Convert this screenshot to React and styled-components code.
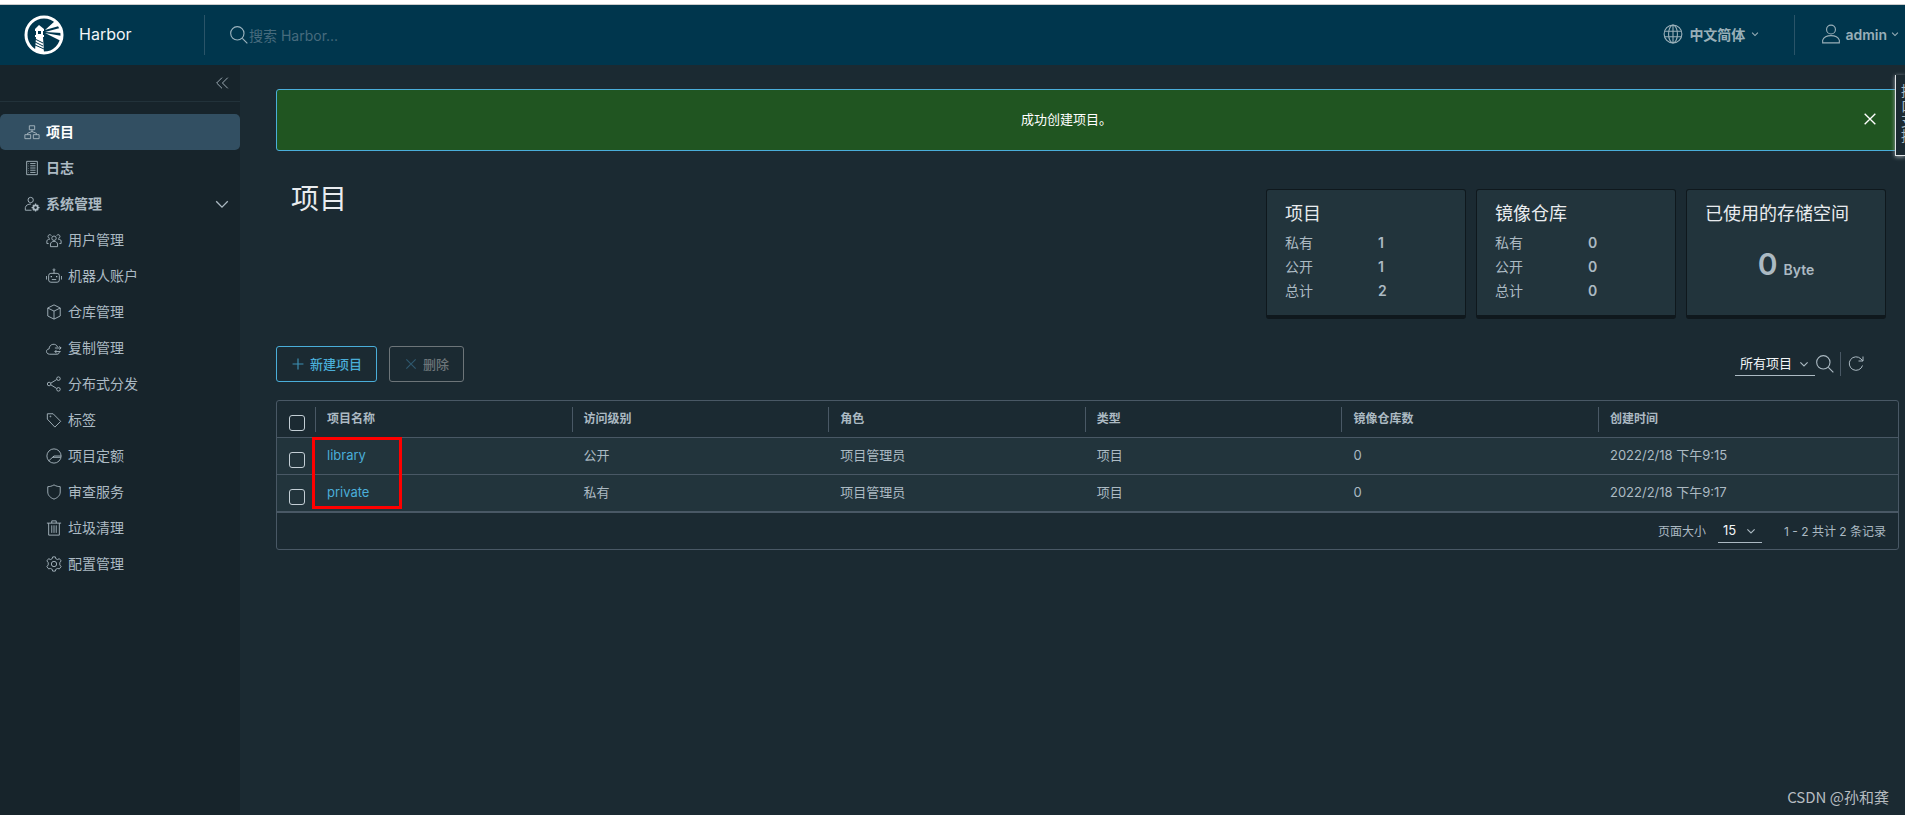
import { useState } from 'react';
import styled, { createGlobalStyle } from 'styled-components';

const GlobalStyle = createGlobalStyle`
  * {
    box-sizing: border-box;
  }

  body {
    margin: 0;
    background: #1b2a32;
    color: #acbac3;
    font-family: Inter, "Noto Sans CJK SC", sans-serif;
    font-size: 14px;
  }

  button, input, select {
    font-family: inherit;
  }
`;

const Page = styled.div`
  display: flex;
  flex-direction: column;
  min-height: 100vh;
  position: relative;
  overflow: hidden;
`;

const TopStrip = styled.div`
  height: 5px;
  background: #fff;
  border-bottom: 1px solid #ccc;
`;

const Header = styled.header`
  display: flex;
  align-items: center;
  height: 60px;
  padding: 0 6px 0 24px;
  background: #00364d;
`;

const Brand = styled.a`
  display: flex;
  align-items: center;
  gap: 15px;
  width: 180px;
  color: #f2f5f7;
  font-size: 16px;
  text-decoration: none;
`;

const BrandName = styled.span`
  padding-bottom: 2px;
`;

const HeaderDivider = styled.span`
  width: 1px;
  height: 40px;
  background: #2a5468;
`;

const SearchBox = styled.label`
  display: flex;
  align-items: center;
  flex: 1;
  padding-left: 24px;
  color: #9db5c0;
`;

const SearchInput = styled.input`
  flex: 1;
  height: 24px;
  padding: 0;
  border: none;
  outline: none;
  background: transparent;
  color: #dfe8ec;
  font-size: 14px;

  &::placeholder {
    color: #476b7d;
    opacity: 1;
  }
`;

const HeaderButton = styled.button`
  display: flex;
  align-items: center;
  gap: ${(props) => props.$gap};
  padding: ${(props) => props.$padding};
  border: none;
  background: transparent;
  color: #99afb8;
  font-size: 14px;
  font-weight: 600;
  cursor: pointer;
`;

const Body = styled.div`
  display: flex;
  flex: 1;
`;

const Sidebar = styled.nav`
  flex: 0 0 240px;
  background: #17242b;
`;

const CollapseBar = styled.div`
  display: flex;
  justify-content: flex-end;
  align-items: center;
  height: 37px;
  padding-right: 10px;
  border-bottom: 1px solid #22323a;
`;

const IconButton = styled.button`
  display: flex;
  align-items: center;
  justify-content: center;
  padding: 0;
  border: none;
  background: transparent;
  color: ${(props) => props.$color || '#acbac3'};
  cursor: pointer;
`;

const NavList = styled.ul`
  margin: 12px 0 0;
  padding: 0;
  list-style: none;
`;

const NavLink = styled.a`
  display: flex;
  align-items: center;
  gap: 6px;
  height: 36px;
  padding: 0 10px 0 ${(props) => (props.$sub ? '46px' : '24px')};
  border-radius: 5px;
  background: ${(props) => (props.$active ? '#324f62' : 'transparent')};
  color: ${(props) => (props.$active ? '#fff' : '#acbac3')};
  font-weight: ${(props) => (props.$sub ? 400 : 700)};
  text-decoration: none;

  svg {
    color: #acbac3;
  }
`;

const NavText = styled.span`
  flex: 1;
  padding-bottom: 2px;
`;

const Main = styled.main`
  flex: 1;
  min-width: 0;
  padding: 24px 6px 24px 36px;
`;

const Alert = styled.div`
  display: flex;
  align-items: center;
  height: 62px;
  padding: 0 20px 3px 0;
  border: 1px solid #4aaed9;
  border-radius: 3px;
  background: #205521;
  color: #fff;
  font-size: 13px;
`;

const AlertText = styled.span`
  flex: 1;
  padding-right: 6px;
  text-align: center;
`;

const Summary = styled.section`
  display: flex;
  justify-content: space-between;
  align-items: flex-start;
  padding: 38px 13px 0 15px;
`;

const PageTitle = styled.h1`
  margin: 0;
  color: #e9ecef;
  font-size: 28px;
  font-weight: 400;
  line-height: 20px;
`;

const Cards = styled.div`
  display: flex;
  gap: 10px;
`;

const Card = styled.div`
  width: 200px;
  height: 130px;
  padding: 12px 18px 0;
  border: 1px solid #0f181d;
  border-bottom-width: 4px;
  border-radius: 3px;
  background: #22343c;
`;

const CardTitle = styled.h2`
  margin: 0 0 5px;
  color: #e9ecef;
  font-size: 18px;
  font-weight: 400;
  line-height: 24px;
  white-space: nowrap;
`;

const Stats = styled.dl`
  display: grid;
  grid-template-columns: 93px 1fr;
  margin: 0;
  line-height: 24px;
`;

const StatValue = styled.dd`
  margin: 0;
  font-weight: 600;
`;

const Storage = styled.p`
  display: flex;
  justify-content: center;
  align-items: baseline;
  gap: 6px;
  margin: 0;
  padding-top: 13px;
  font-size: 14px;
  font-weight: 600;
  line-height: 40px;
`;

const StorageValue = styled.span`
  font-size: 30px;
`;

const Toolbar = styled.div`
  display: flex;
  align-items: center;
  gap: 12px;
  margin-top: 27px;
  padding-right: 34px;
`;

const ActionButton = styled.button`
  display: flex;
  align-items: center;
  justify-content: center;
  gap: 5px;
  height: 36px;
  padding: 0 14px;
  border: 1px solid ${(props) => (props.disabled ? '#6d7579' : '#4aaed9')};
  border-radius: 3px;
  background: transparent;
  color: ${(props) => (props.disabled ? '#6d7579' : '#4aaed9')};
  font-size: 13px;
  font-weight: 500;

  svg {
    color: ${(props) => (props.disabled ? '#2f586e' : '#3d8fb3')};
  }
`;

const ActionText = styled.span`
  padding-bottom: 2px;
`;

const Filters = styled.div`
  display: flex;
  align-items: center;
  margin-left: auto;
  color: #acbac3;
`;

const FilterDivider = styled.span`
  width: 1px;
  height: 24px;
  margin: 0 6px 0 5px;
  background: #495865;
`;

const SelectWrap = styled.span`
  display: flex;
  align-items: center;
  width: ${(props) => props.$width};
  height: 24px;
  border-bottom: 1px solid #acbac3;

  svg {
    flex: none;
    margin-right: 6px;
    pointer-events: none;
  }
`;

const Select = styled.select`
  flex: 1;
  min-width: 0;
  padding: 0 0 2px 5px;
  border: none;
  outline: none;
  appearance: none;
  background: transparent;
  color: #f2f5f7;
  font-size: 13px;

  option {
    background: #1b2a32;
  }
`;

const GridBox = styled.div`
  position: relative;
  margin-top: 18px;
  border: 1px solid #495865;
  border-radius: 3px;
`;

const Table = styled.table`
  width: 100%;
  table-layout: fixed;
  border-collapse: separate;
  border-spacing: 0;
  font-size: 13px;
`;

const CheckCol = styled.col`
  width: 38px;
`;

const DataCol = styled.col`
  width: 15.83%;
`;

const HeadCell = styled.th`
  height: 36px;
  padding: 0;
  font-size: 12px;
  font-weight: 600;
  text-align: left;
`;

const HeadLabel = styled.span`
  display: block;
  height: 25px;
  padding-left: 11px;
  border-left: 1px solid #495865;
  line-height: 24px;
`;

const Row = styled.tr`
  background: #22343c;
`;

const Cell = styled.td`
  height: 37px;
  padding: 0 12px 3px;
  border-top: 1px solid #495865;
`;

const CheckHead = styled.th`
  padding: 14px 0 0 12px;
  vertical-align: top;
`;

const CheckCell = styled.td`
  padding: 14px 0 0 12px;
  border-top: 1px solid #495865;
  vertical-align: top;
`;

const Checkbox = styled.input`
  display: block;
  width: 16px;
  height: 16px;
  margin: 0;
  border: 1px solid #c3ced5;
  border-radius: 3px;
  appearance: none;

  &:checked {
    background: #4aaed9;
  }
`;

const ProjectLink = styled.a`
  color: #4aaed9;
  text-decoration: none;
`;

const GridFooter = styled.div`
  display: flex;
  align-items: center;
  justify-content: flex-end;
  height: 38px;
  padding: 0 12px 0 0;
  border-top: 2px solid #495865;
  font-size: 12px;
`;

const PageSize = styled.label`
  display: flex;
  align-items: center;
  gap: 12px;
  margin-right: 22px;
`;

const FooterText = styled.span`
  padding-bottom: 2px;
`;

const Highlight = styled.div`
  position: absolute;
  top: 36px;
  left: 35px;
  width: 90px;
  height: 72px;
  border: 3px solid #f00;
  pointer-events: none;
`;

const SideTab = styled.button`
  position: absolute;
  top: 75px;
  right: 0;
  width: 10px;
  height: 81px;
  padding: 8px 0 0 5px;
  overflow: hidden;
  border: solid #dfe3e6;
  border-width: 0 0 1px 1px;
  background: #1b2a32;
  box-shadow: 0 1px 4px 0 #9aa3a8;
  color: #acbac3;
  font-size: 14px;
  line-height: 15px;
  text-align: left;
`;

const SideTabText = styled.span`
  display: block;
  width: 14px;
  height: 72px;
  word-break: break-all;
`;

const Watermark = styled.div`
  position: absolute;
  right: 16px;
  bottom: 9px;
  color: #b6bcc0;
  font-family: "Noto Sans CJK SC", sans-serif;
  font-size: 15px;
  line-height: 18px;
`;

const ICONS = {
  search: (
    <>
      <circle cx="15" cy="15" r="12" />
      <path d="M24 24l9 9" />
    </>
  ),
  collapse: <path d="M18 6L6 18l12 12M31 6L19 18l12 12" />,
  down: <path d="M5 12l13 13 13-13" />,
  close: <path d="M6 6l24 24M30 6L6 30" />,
  plus: <path d="M18 4v28M4 18h28" />,
  refresh: <path d="M31 21a13.500 13.500 0 1 1-3-13l4 4M32 3v9h-9" />,
  globe: (
    <>
      <circle cx="18" cy="18" r="16" />
      <ellipse cx="18" cy="18" rx="8" ry="16" />
      <path d="M18 2v32M3 13h30M3 23h30" />
    </>
  ),
  user: (
    <>
      <circle cx="18" cy="10" r="8" />
      <path d="M3 34v-5c2-5 8-8 15-8s13 3 15 8v5z" />
    </>
  ),
  projects: (
    <>
      <path d="M12 4h12v9H12zM2 24h13v9H2zM21 24h13v9H21zM18 13v5M8 24v-3l10-4 10 4v3" />
    </>
  ),
  logs: (
    <>
      <path d="M6 3h24v30H6z" />
      <path d="M10 8v1M10 13v1M10 18v1M10 23v1M10 28v1M14 8h12M14 13h12M14 18h12M14 23h12M14 28h12" />
    </>
  ),
  admin: (
    <>
      <circle cx="15" cy="9" r="6" />
      <path d="M17 32H3v-6c1-5 6-8 13-8" />
      <circle cx="26" cy="26" r="5" strokeWidth="4" />
      <path d="M26 17v4M26 31v4M17 26h4M31 26h4M20 20l2 2M30 30l2 2M32 20l-2 2M22 30l-2 2" strokeWidth="3" />
    </>
  ),
  users: (
    <>
      <circle cx="18" cy="14" r="5" />
      <path d="M10 33v-6c1-4 4-6 8-6s7 2 8 6v6z" />
      <path d="M12 8a4 4 0 1 0-4 6M24 8a4 4 0 1 1 4 6M2 26v-6c1-3 3-4 7-4M34 26v-6c-1-3-3-4-7-4M2 26h4M30 26h4" />
    </>
  ),
  robot: (
    <>
      <rect x="6" y="12" width="24" height="20" rx="5" />
      <path d="M18 12V7M1 18v8M35 18v8M13 26h10" />
      <circle cx="18" cy="4" r="2" />
      <path d="M12 18v3M24 18v3" strokeWidth="3" />
    </>
  ),
  cube: <path d="M18 2l14 7v18l-14 7-14-7V9zM4 9l14 7 14-7M18 16v18" />,
  cloud: (
    <>
      <path d="M30 26c0 4-2 6-5 6H8c-9 0-9-12-1-12 0-12 16-14 19-4" />
      <path d="M20 18h14M30 14l4 4-4 4M33 26H20M24 22l-4 4 4 4" />
    </>
  ),
  share: (
    <>
      <circle cx="7" cy="18" r="4" />
      <circle cx="28" cy="6" r="4" />
      <circle cx="28" cy="30" r="4" />
      <path d="M11 16l13-8M11 20l13 8" />
    </>
  ),
  tag: (
    <>
      <path d="M3 4v12l17 18 13-13L16 4z" />
      <circle cx="10" cy="10" r="1" />
    </>
  ),
  quota: (
    <>
      <circle cx="18" cy="18" r="16" />
      <path d="M6 29l12-11h16M18 18l-3 3h18" />
    </>
  ),
  shield: <path d="M18 2c5 3 10 4 14 4v12c0 8-6 13-14 16C10 31 4 26 4 18V6c4 0 9-1 14-4z" />,
  trash: <path d="M2 7h32M6 7v27h24V7M13 7V2h10v5M13 12v17M18 12v17M23 12v17" />,
  cog: (
    <>
      <circle cx="18" cy="18" r="6" />
      <path d="M15 2h6l1 4 4 2 4-2 4 5-3 4v5l3 4-4 5-4-1-4 2-1 4h-6l-1-4-4-2-4 1-4-5 3-4v-5l-3-4 4-5 4 2 4-2z" />
    </>
  ),
};

const Icon = ({ name, size = 16, weight = 2 }) => (
  <svg
    width={size}
    height={size}
    viewBox="0 0 36 36"
    fill="none"
    stroke="currentColor"
    strokeWidth={weight}
    aria-hidden="true"
  >
    {ICONS[name]}
  </svg>
);

const Logo = () => (
  <svg width="40" height="40" viewBox="0 0 40 40" aria-hidden="true">
    <circle cx="20" cy="20" r="18" fill="none" stroke="#fff" strokeWidth="3" />
    <path d="M15 10l5 4v2h-1v4h1v2h-9v-2h1v-4h-1v-2z" fill="#fff" />
    <path d="M14 16h3v3h-3z" fill="#00364d" />
    <path d="M12 22h7l1 16-9-2z" fill="#fff" />
    <path d="M11 24l8 4M11 27l8 4M11 30l9 4" stroke="#00364d" strokeWidth="1" />
    <path d="M21 15L31 6l4 5zM21 17l15-4 2 5zM21 18l17 3-1 5z" fill="#fff" />
  </svg>
);

const subItems = [
  { icon: 'users', label: '用户管理' },
  { icon: 'robot', label: '机器人账户' },
  { icon: 'cube', label: '仓库管理' },
  { icon: 'cloud', label: '复制管理' },
  { icon: 'share', label: '分布式分发' },
  { icon: 'tag', label: '标签' },
  { icon: 'quota', label: '项目定额' },
  { icon: 'shield', label: '审查服务' },
  { icon: 'trash', label: '垃圾清理' },
  { icon: 'cog', label: '配置管理' },
];

const summaries = [
  { title: '项目', values: [1, 1, 2] },
  { title: '镜像仓库', values: [0, 0, 0] },
];

const columns = ['项目名称', '访问级别', '角色', '类型', '镜像仓库数', '创建时间'];

const projects = [
  { name: 'library', access: '公开', role: '项目管理员', type: '项目', repos: 0, created: '2022/2/18 下午9:15' },
  { name: 'private', access: '私有', role: '项目管理员', type: '项目', repos: 0, created: '2022/2/18 下午9:17' },
];

const NavItem = ({ icon, label, sub, active, expandable }) => (
  <li>
    <NavLink href="#" $sub={sub} $active={active}>
      <Icon name={icon} />
      <NavText>{label}</NavText>
      {expandable && <Icon name="down" weight={3} />}
    </NavLink>
  </li>
);

const SummaryCard = ({ title, values }) => (
  <Card>
    <CardTitle>{title}</CardTitle>
    <Stats>
      <dt>私有</dt>
      <StatValue>{values[0]}</StatValue>
      <dt>公开</dt>
      <StatValue>{values[1]}</StatValue>
      <dt>总计</dt>
      <StatValue>{values[2]}</StatValue>
    </Stats>
  </Card>
);

const ProjectTable = () => {
  const [selected, setSelected] = useState([]);

  const toggle = (name) => {
    setSelected((prev) =>
      prev.includes(name) ? prev.filter((n) => n !== name) : [...prev, name]
    );
  };

  const toggleAll = (e) => {
    setSelected(e.target.checked ? projects.map((p) => p.name) : []);
  };

  return (
    <GridBox>
      <Table>
        <colgroup>
          <CheckCol />
          {columns.slice(0, -1).map((c) => (
            <DataCol key={c} />
          ))}
          <col />
        </colgroup>
        <thead>
          <tr>
            <CheckHead>
              <Checkbox
                type="checkbox"
                aria-label="全选"
                checked={selected.length === projects.length}
                onChange={toggleAll}
              />
            </CheckHead>
            {columns.map((c) => (
              <HeadCell key={c}>
                <HeadLabel>{c}</HeadLabel>
              </HeadCell>
            ))}
          </tr>
        </thead>
        <tbody>
          {projects.map((p) => (
            <Row key={p.name}>
              <CheckCell>
                <Checkbox
                  type="checkbox"
                  aria-label={p.name}
                  checked={selected.includes(p.name)}
                  onChange={() => toggle(p.name)}
                />
              </CheckCell>
              <Cell>
                <ProjectLink href="#">{p.name}</ProjectLink>
              </Cell>
              <Cell>{p.access}</Cell>
              <Cell>{p.role}</Cell>
              <Cell>{p.type}</Cell>
              <Cell>{p.repos}</Cell>
              <Cell>{p.created}</Cell>
            </Row>
          ))}
        </tbody>
      </Table>
      <GridFooter>
        <PageSize>
          <FooterText>页面大小</FooterText>
          <SelectWrap $width="44px">
            <Select defaultValue="15">
              <option>15</option>
              <option>25</option>
              <option>50</option>
            </Select>
            <Icon name="down" size={10} weight={4} />
          </SelectWrap>
        </PageSize>
        <FooterText>1 - 2 共计 2 条记录</FooterText>
      </GridFooter>
      <Highlight />
    </GridBox>
  );
};

const App = () => {
  const [alertOpen, setAlertOpen] = useState(true);

  return (
    <Page>
      <GlobalStyle />
      <TopStrip />
      <Header>
        <Brand href="#">
          <Logo />
          <BrandName>Harbor</BrandName>
        </Brand>
        <HeaderDivider />
        <SearchBox>
          <Icon name="search" size={20} />
          <SearchInput type="text" placeholder="搜索 Harbor..." aria-label="搜索 Harbor" />
        </SearchBox>
        <HeaderButton $gap="6px" $padding="0 35px 2px 0">
          <Icon name="globe" size={20} />
          中文简体
          <Icon name="down" size={8} weight={5} />
        </HeaderButton>
        <HeaderDivider />
        <HeaderButton $gap="4px" $padding="0 0 2px 26px">
          <Icon name="user" size={20} />
          admin
          <Icon name="down" size={8} weight={5} />
        </HeaderButton>
      </Header>
      <Body>
        <Sidebar>
          <CollapseBar>
            <IconButton aria-label="收起">
              <Icon name="collapse" />
            </IconButton>
          </CollapseBar>
          <NavList>
            <NavItem icon="projects" label="项目" active />
            <NavItem icon="logs" label="日志" />
            <NavItem icon="admin" label="系统管理" expandable />
            {subItems.map((item) => (
              <NavItem key={item.label} sub {...item} />
            ))}
          </NavList>
        </Sidebar>
        <Main>
          {alertOpen && (
            <Alert role="alert">
              <AlertText>成功创建项目。</AlertText>
              <IconButton $color="#fff" aria-label="关闭" onClick={() => setAlertOpen(false)}>
                <Icon name="close" weight={3} />
              </IconButton>
            </Alert>
          )}
          <Summary>
            <PageTitle>项目</PageTitle>
            <Cards>
              {summaries.map((s) => (
                <SummaryCard key={s.title} {...s} />
              ))}
              <Card>
                <CardTitle>已使用的存储空间</CardTitle>
                <Storage>
                  <StorageValue>0</StorageValue>
                  Byte
                </Storage>
              </Card>
            </Cards>
          </Summary>
          <Toolbar>
            <ActionButton>
              <Icon name="plus" size={14} weight={3} />
              <ActionText>新建项目</ActionText>
            </ActionButton>
            <ActionButton disabled>
              <Icon name="close" size={14} weight={3} />
              <ActionText>删除</ActionText>
            </ActionButton>
            <Filters>
              <SelectWrap $width="80px">
                <Select defaultValue="所有项目" aria-label="项目类型">
                  <option>所有项目</option>
                  <option>私有项目</option>
                  <option>公开项目</option>
                </Select>
                <Icon name="down" size={10} weight={4} />
              </SelectWrap>
              <IconButton aria-label="搜索">
                <Icon name="search" size={20} />
              </IconButton>
              <FilterDivider />
              <IconButton aria-label="刷新">
                <Icon name="refresh" size={18} />
              </IconButton>
            </Filters>
          </Toolbar>
          <ProjectTable />
        </Main>
      </Body>
      <SideTab>
        <SideTabText>接口支持</SideTabText>
      </SideTab>
      <Watermark>CSDN @孙和龚</Watermark>
    </Page>
  );
};

export default App;
